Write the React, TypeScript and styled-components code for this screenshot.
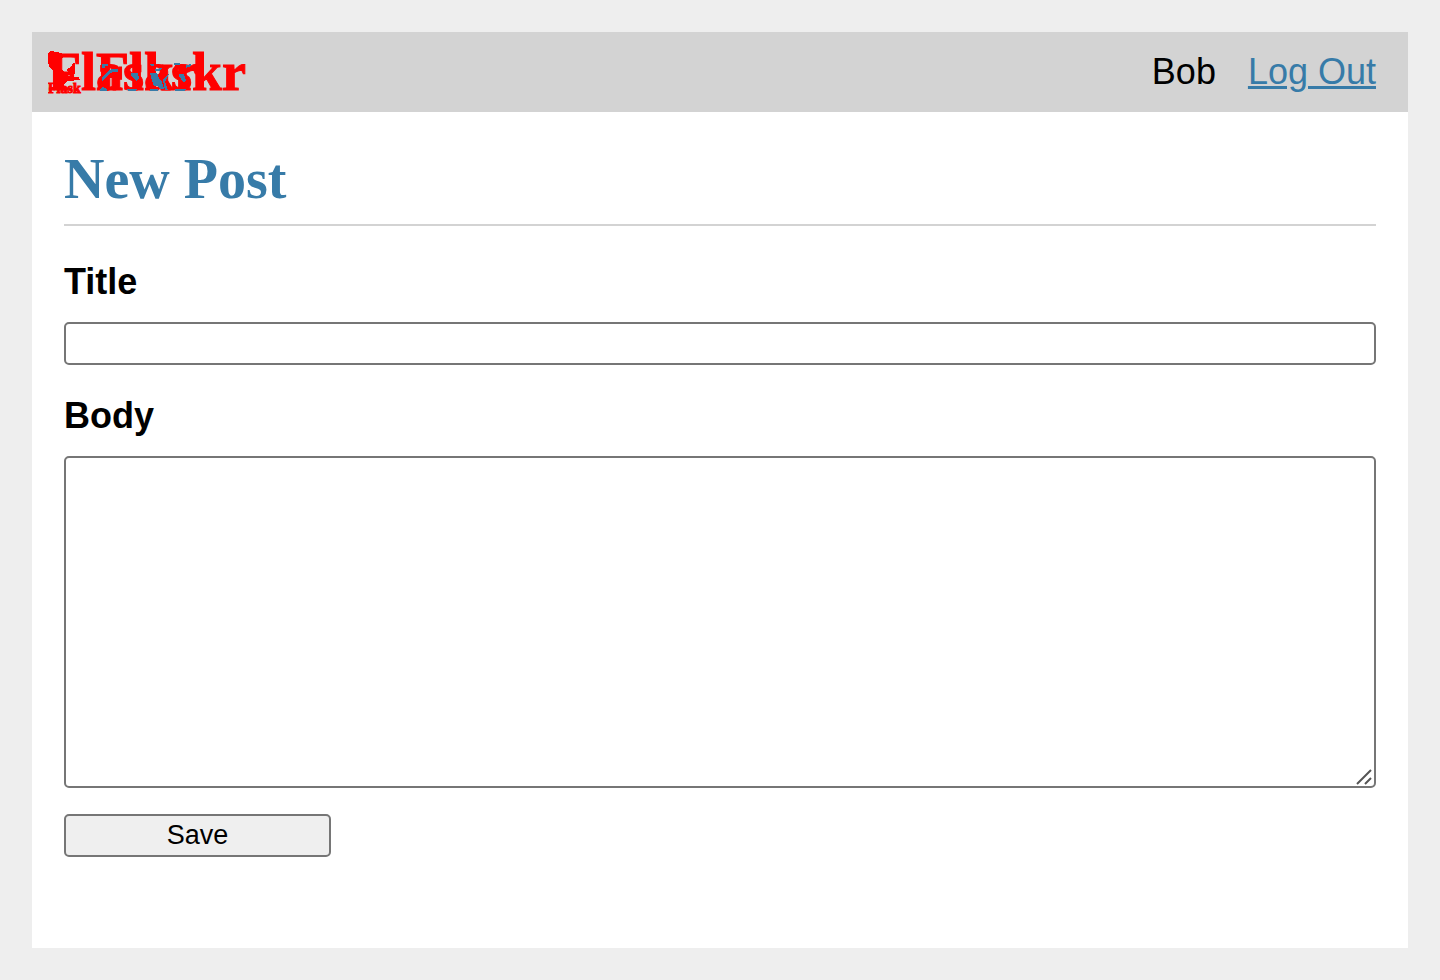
import React from 'react';
import styled, { createGlobalStyle } from 'styled-components';

const GlobalStyle = createGlobalStyle`
  *, *::before, *::after { box-sizing: border-box; }
  html { background: #eee; }
  body {
    margin: 0;
    padding: 32px;
    font-family: "Liberation Sans", Arial, sans-serif;
    font-size: 36px;
    line-height: 40px;
    color: #000;
  }
`;

const Page = styled.div`
  background: #fff;
  min-height: calc(100vh - 64px);
`;

const Nav = styled.nav`
  display: flex;
  align-items: center;
  justify-content: space-between;
  min-height: 80px;
  padding: 0 32px 0 16px;
  background: #d3d3d3;
`;

const Brand = styled.a`
  position: relative;
  display: grid;
  color: #f00;
  font: bold 54px/64px "Liberation Serif", "Times New Roman", serif;
  text-decoration: none;
`;

const Word = styled.span<{ $indent?: number }>`
  grid-area: 1 / 1;
  padding-left: ${({ $indent = 0 }) => $indent}px;
  -webkit-text-stroke: 1px #f00;
`;

const Mark = styled.svg`
  position: absolute;
  top: 0;
  left: 0;
  width: 200px;
  height: 64px;
`;

const UserList = styled.ul`
  display: flex;
  gap: 32px;
  margin: 0;
  padding: 0;
  list-style: none;
`;

const LogOut = styled.a`
  color: #377ba8;
  text-decoration-thickness: 3px;
`;

const Content = styled.main`
  padding: 32px;
`;

const Heading = styled.h1`
  margin: 0 0 32px;
  padding: 3px 0 13px;
  border-bottom: 2px solid #d3d3d3;
  color: #377ba8;
  font: bold 56px/64px "Liberation Serif", "Times New Roman", serif;
`;

const Form = styled.form`
  display: flex;
  flex-direction: column;
  align-items: stretch;
`;

const Label = styled.label`
  margin-bottom: 16px;
  font-weight: bold;
  line-height: 48px;
`;

const TextInput = styled.input`
  height: 43px;
  margin: 0 0 27px;
  padding: 2px 4px;
  border: 2px solid #767676;
  border-radius: 5px;
  background: #fff;
  font: 27px/32px "Liberation Sans", Arial, sans-serif;
`;

const BodyField = styled.div`
  position: relative;
  display: flex;
  margin-bottom: 26px;
`;

const TextArea = styled.textarea`
  flex: 1;
  height: 332px;
  margin: 0;
  padding: 4px;
  border: 2px solid #767676;
  border-radius: 5px;
  background: #fff;
  resize: none;
  font: 27px/32px "Liberation Sans", Arial, sans-serif;
`;

const Grip = styled.svg`
  position: absolute;
  right: 2px;
  bottom: 2px;
  width: 18px;
  height: 18px;
  pointer-events: none;
`;

const SaveButton = styled.button`
  align-self: flex-start;
  width: 267px;
  height: 43px;
  padding: 0 0 2px;
  border: 2px solid #767676;
  border-radius: 5px;
  background: #efefef;
  color: #000;
  font: 27px/32px "Liberation Sans", Arial, sans-serif;
`;

const BrandMark = () => (
  <Mark viewBox="0 0 200 64" aria-hidden="true" shapeRendering="crispEdges">
    <path
      fill="#f00"
      d="M0 13 3 11 8 12 14 13 15 17 13 20 12 24 13 29 17 33 21 36 31 37 32 40 20 41 16 44 16 49 7 49 7 36 5 31 2 28 0 23ZM18 30 23 27 25 23 27 23 27 34 22 33Z"
    />
    <g fill="#377ba8">
      <path d="M54 24h6v2h-3v2h-3zM60 31l4-2h6v3h-5l-4 2-3 4-4 3v-4l3-3zM52 49l3-2 4 2v2h-7z" />
      <path d="M83 33h7l1 6-3 2-5-6zM79 49h10l-1 2h-8z" />
      <path d="M102 24h4v2h-3zM102 33h7l2 5 3 4 2 7h-4l-2-3h-4l-2-5zM102 49h8v2h-8zM115 40l4-5 2-1-4 8 3 8h-3z" />
      <path d="M126 23h6v2h-6zM138 25l5-1v2l-5 2zM131 34h5l2 7-3 1-4-6zM127 49h11l-2 2h-9zM107 29l7-1-2 3h-5z" />
    </g>
    <text x="0" y="53" fill="#f00" fontSize="14" fontWeight="bold" stroke="#f00" strokeWidth="1">
      Flask
    </text>
  </Mark>
);

export default function App() {
  return (
    <>
      <GlobalStyle />
      <Page>
        <Nav>
          <Brand href="#" aria-label="Flaskr">
            <Word>Flaskr</Word>
            <Word $indent={48}>Flaskr</Word>
            <BrandMark />
          </Brand>
          <UserList>
            <li>Bob</li>
            <li><LogOut href="#logout">Log Out</LogOut></li>
          </UserList>
        </Nav>
        <Content>
          <Heading>New Post</Heading>
          <Form onSubmit={(e: React.FormEvent) => e.preventDefault()}>
            <Label htmlFor="title">Title</Label>
            <TextInput id="title" name="title" />
            <Label htmlFor="body">Body</Label>
            <BodyField>
              <TextArea id="body" name="body" />
              <Grip viewBox="0 0 18 18" aria-hidden="true">
                <path d="M1 16 15 2M9 16 15 10" fill="none" stroke="#555" strokeWidth="2" />
              </Grip>
            </BodyField>
            <SaveButton type="submit">Save</SaveButton>
          </Form>
        </Content>
      </Page>
    </>
  );
}
